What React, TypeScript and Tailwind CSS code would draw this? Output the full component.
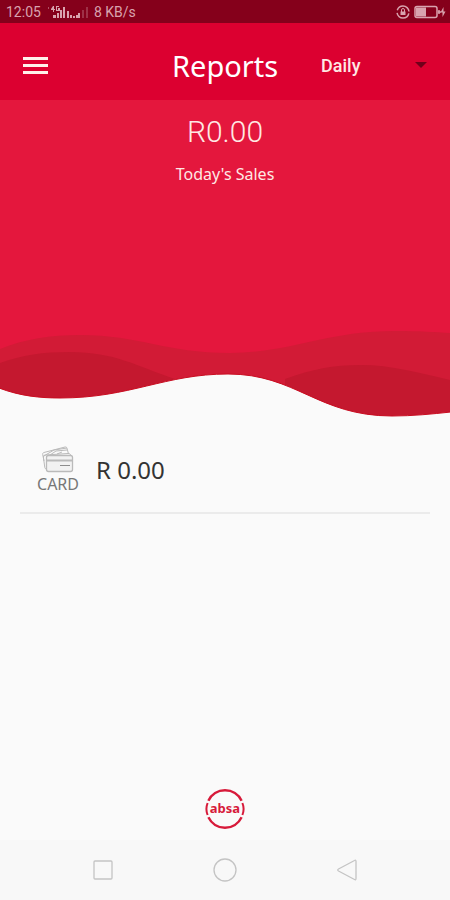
import React from 'react';

function StatusBar() {
    return (
        <div className="flex h-[23px] items-center justify-between bg-[#85001b] pl-[6px] pr-1 font-['Roboto',sans-serif] text-[#d9a3ae]">
            <div className="flex items-center">
                <span className="text-sm">12:05</span>
                <svg className="ml-[7px] h-[14px] w-[42px]" viewBox="0 0 42 14" fill="currentColor" aria-hidden="true">
                    <path d="M0 2h1v2H0z" opacity=".5" />
                    <path d="M5 1h1v3h1v1H6v2H5V5H3V4zM8 1h3v1H9v3h1V3h2v3H8z" />
                    <path d="M5 10h3v3H5zM9 8h2v5H9zM12 5h2v8h-2zM15 2h2v11h-2z" />
                    <path d="M19 6h2v7h-2zM22 10h2v3h-2zM25 11h2v2h-2zM28 10h2v3h-2zM30 8h2v5h-2z" />
                    <path d="M34 5h2v8h-2zM38 2h2v11h-2z" opacity=".3" />
                </svg>
                <span className="ml-1 text-sm">8 KB/s</span>
            </div>
            <div className="flex items-center gap-1">
                <svg className="h-[14px] w-[14px]" viewBox="0 0 14 14" fill="none" stroke="currentColor" aria-hidden="true">
                    <circle cx="7" cy="7" r="6" strokeWidth="1.5" strokeDasharray="16 2.85" strokeDashoffset="-1.4" />
                    <path d="M5.5 7V5a1.5 1.5 0 0 1 3 0v2" />
                    <path d="M4.500 6.500h5v3.500h-5z" fill="currentColor" stroke="none" />
                </svg>
                <svg className="h-[14px] w-8" viewBox="0 0 32 14" fill="none" stroke="currentColor" aria-hidden="true">
                    <rect x="1" y="1.500" width="22" height="11" rx="2" strokeWidth="1.500" />
                    <path d="M2 2.500h10v9H2z" fill="currentColor" stroke="none" />
                    <path d="M24 7h3M25 5v4" strokeWidth="1.500" />
                    <path d="M29.500 2l-3 5.500h2V12l3-5.500h-2z" fill="currentColor" stroke="none" />
                </svg>
            </div>
        </div>
    );
}

function Header() {
    return (
        <header className="flex h-[77px] items-center bg-[#dc0030] pt-2 text-white">
            <button type="button" aria-label="Open menu" className="ml-[23px] flex flex-col gap-1">
                <span className="h-[3px] w-[25px] bg-[#fff0ea]" />
                <span className="h-[3px] w-[25px] bg-[#fff0ea]" />
                <span className="h-[3px] w-[25px] bg-[#fff0ea]" />
            </button>
            <h1 className="flex-1 pl-[124px] text-[29px] leading-9">Reports</h1>
            <div className="relative mr-[23px] w-[106px] font-['Roboto',sans-serif]">
                <select aria-label="Period" defaultValue="Daily" className="w-full appearance-none bg-transparent text-lg font-medium text-[#ffe8e4]">
                    <option>Daily</option>
                    <option>Weekly</option>
                    <option>Monthly</option>
                </select>
                <svg className="pointer-events-none absolute right-0 top-[10px] h-[6px] w-3" viewBox="0 0 12 6" fill="#70001a" aria-hidden="true">
                    <path d="M0 0h12L6 6z" />
                </svg>
            </div>
        </header>
    );
}

function Waves() {
    return (
        <svg className="block h-[100px] w-full bg-[#e4173d]" viewBox="0 0 450 100" preserveAspectRatio="none" aria-hidden="true">
            <path fill="#d21b36" d="M0 29C25 19 50 15 80 15c60 0 85 18 150 18 60 0 95-22 165-22 25 0 40 1 55 2v87H0z" />
            <path fill="#c4182f" d="M0 43c22-8 43-11 70-11 45 0 66 14 105 27v41H0zM285 59c28-10 48-14 75-14 32 0 60 8 90 15v40H285z" />
            <path fill="#fafafa" stroke="#c90c20" strokeWidth="1" d="M-1 68C20 76 40 78 60 78c70 0 105-24 168-24 68 0 90 42 164 42 21 0 40-2 59-4v9H-1z" />
        </svg>
    );
}

function CardIcon() {
    return (
        <svg className="h-7 w-8" viewBox="0 0 32 28" fill="none" stroke="#bababa" aria-hidden="true">
            <path d="M2 15L.7 8.500c-.2-1 .2-1.700 1.200-2L23 1c1-.2 1.700.2 2 1.200L26.500 8" />
            <path d="M1 10.500l11-6.500 13-2M8 9l6-4 11-1M15 8l5-2" />
            <path d="M4.500 23c-1 0-1.500-.5-1.700-1.500L1.500 12c-.2-2 .5-3 2-3L26 7.500c1.500 0 2.500.5 3 2" />
            <rect x="4.500" y="9.500" width="26" height="16" rx="2" fill="#f2f2f2" strokeWidth="1.300" />
            <path d="M5 14.500h25" strokeWidth="2" />
            <path d="M18 19.500h10" stroke="#8d8d8d" />
        </svg>
    );
}

function AbsaLogo() {
    return (
        <svg className="h-10 w-10" viewBox="0 0 40 40" fill="none" stroke="#d71a3a" strokeWidth="2.500" role="img" aria-label="absa">
            <path d="M3.400 11.800a18.400 18.400 0 0 1 33.200 0M3.400 28.200a18.400 18.400 0 0 0 33.200 0" />
            <path d="M2.600 14q-2.400 6 0 12M37.400 14q2.400 6 0 12" strokeWidth="2" />
            <text x="20" y="24" textAnchor="middle" fill="#d71a3a" stroke="none" className="font-['Noto_Sans',sans-serif] text-[13px] font-bold">
                absa
            </text>
        </svg>
    );
}

function NavBar() {
    return (
        <nav className="flex h-[60px] items-center justify-between bg-[#f8f8f8] px-[91px] text-[#c4c4c4]">
            <button type="button" aria-label="Recent apps">
                <svg className="h-6 w-6" viewBox="0 0 24 24" fill="none" stroke="currentColor" strokeWidth="1.300">
                    <rect x="3" y="3" width="18" height="18" rx="1" />
                </svg>
            </button>
            <button type="button" aria-label="Home">
                <svg className="h-6 w-6" viewBox="0 0 24 24" fill="none" stroke="currentColor" strokeWidth="1.300">
                    <circle cx="12" cy="12" r="11" />
                </svg>
            </button>
            <button type="button" aria-label="Back">
                <svg className="h-6 w-6" viewBox="0 0 24 24" fill="none" stroke="currentColor" strokeWidth="1.300" strokeLinejoin="round">
                    <path d="M19.500 2.500q1.500-1 1.500 1v17q0 2-1.500 1L3.500 13q-1.500-1 0-2z" />
                </svg>
            </button>
        </nav>
    );
}

export default function App() {
    return (
        <div className="flex min-h-screen flex-col bg-[#fafafa] font-['Noto_Sans',sans-serif]">
            <StatusBar />
            <Header />
            <section>
                <div className="h-[220px] bg-[#e4173d] pt-3 text-center text-[#ffe9e4]">
                    <p className="font-['Roboto',sans-serif] text-[30px] font-light leading-10">R0.00</p>
                    <p className="mt-2 text-base leading-7">Today's Sales</p>
                </div>
                <Waves />
            </section>
            <main className="flex-1 px-5">
                <div className="flex h-[94px] items-center border-b-2 border-[#ebebeb] pl-4 pt-2">
                    <div className="flex w-11 flex-col items-center">
                        <CardIcon />
                        <span className="text-base leading-5 text-[#777]">CARD</span>
                    </div>
                    <span className="ml-4 text-2xl text-[#333]">R 0.00</span>
                </div>
            </main>
            <footer>
                <div className="flex justify-center pb-[11px]">
                    <AbsaLogo />
                </div>
                <NavBar />
            </footer>
        </div>
    );
}
